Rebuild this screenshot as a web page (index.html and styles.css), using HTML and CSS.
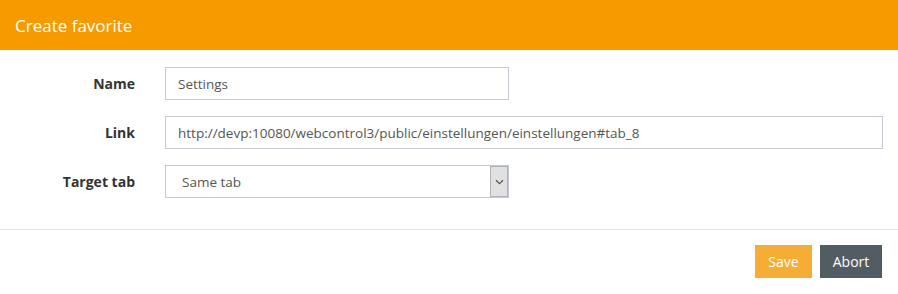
FILE: index.html
```html
<!DOCTYPE html>
<html lang="en">
  <head>
    <meta charset="utf-8" />
    <title>Create favorite</title>
    <link rel="stylesheet" href="styles.css">
  </head>
  <body>
    <div class="modal">
      <div class="modal-header">Create favorite</div>
      <form class="modal-body">
        <label class="form-label" for="fav-name">Name</label>
        <input class="form-input short" id="fav-name" type="text" value="Settings" />
        <label class="form-label" for="fav-link">Link</label>
        <input class="form-input" id="fav-link" type="text" value="http://devp:10080/webcontrol3/public/einstellungen/einstellungen#tab_8" />
        <label class="form-label" for="fav-target">Target tab</label>
        <div class="select-wrap short">
          <select class="form-select" id="fav-target">
            <option>Same tab</option>
            <option>New tab</option>
          </select>
          <span class="select-arrow">
            <svg width="9" height="6" viewBox="0 0 9 6"><path d="M1 1.2 L4.5 4.6 L8 1.2" fill="none" stroke="#555" stroke-width="1.2"/></svg>
          </span>
        </div>
      </form>
      <div class="modal-footer">
        <button class="btn btn-save" type="button">Save</button>
        <button class="btn btn-abort" type="button">Abort</button>
      </div>
    </div>
  </body>
</html>
```

FILE: styles.css
```css
* {
  padding: 0;
  margin: 0;
  box-sizing: border-box;
  font-family: "Open Sans", sans-serif;
}
body {
  background: #fff;
  width: 898px;
  height: 294px;
  overflow: hidden;
}
.modal-header {
  background: #f59b00;
  color: #fff;
  height: 50px;
  padding: 0 15px;
  display: flex;
  align-items: center;
  font-size: 17px;
  font-weight: 400;
}
.modal-body {
  display: grid;
  grid-template-columns: 120px 1fr;
  column-gap: 30px;
  row-gap: 16px;
  align-items: center;
  padding: 17px 15px 31px 15px;
  border-bottom: 1px solid #e5e5e5;
}
.form-label {
  text-align: right;
  font-size: 14px;
  font-weight: 700;
  color: #333;
}
.form-input, .form-select {
  height: 33px;
  border: 1px solid #c3c9d6;
  border-radius: 0;
  padding: 0 12px;
  font-size: 13.5px;
  color: #555;
  background: #fff;
  outline: none;
  width: 100%;
}
.short {
  width: 344px;
}
.select-wrap {
  position: relative;
}
.form-select {
  appearance: none;
  -webkit-appearance: none;
  padding-left: 16px;
}
.select-arrow {
  position: absolute;
  top: 1px;
  right: 1px;
  width: 18px;
  height: 31px;
  background: #e1e1e1;
  border: 1px solid #adb2bb;
  display: flex;
  align-items: center;
  justify-content: center;
  pointer-events: none;
}
.modal-footer {
  display: flex;
  justify-content: flex-end;
  gap: 8px;
  padding: 15px 16px 16px;
}
.btn {
  height: 33px;
  border: none;
  border-radius: 0;
  color: #fff;
  font-size: 14px;
  padding: 0;
}
.btn-save {
  background: #f5ad35;
  width: 57px;
}
.btn-abort {
  background: #525c63;
  width: 62px;
}
```
